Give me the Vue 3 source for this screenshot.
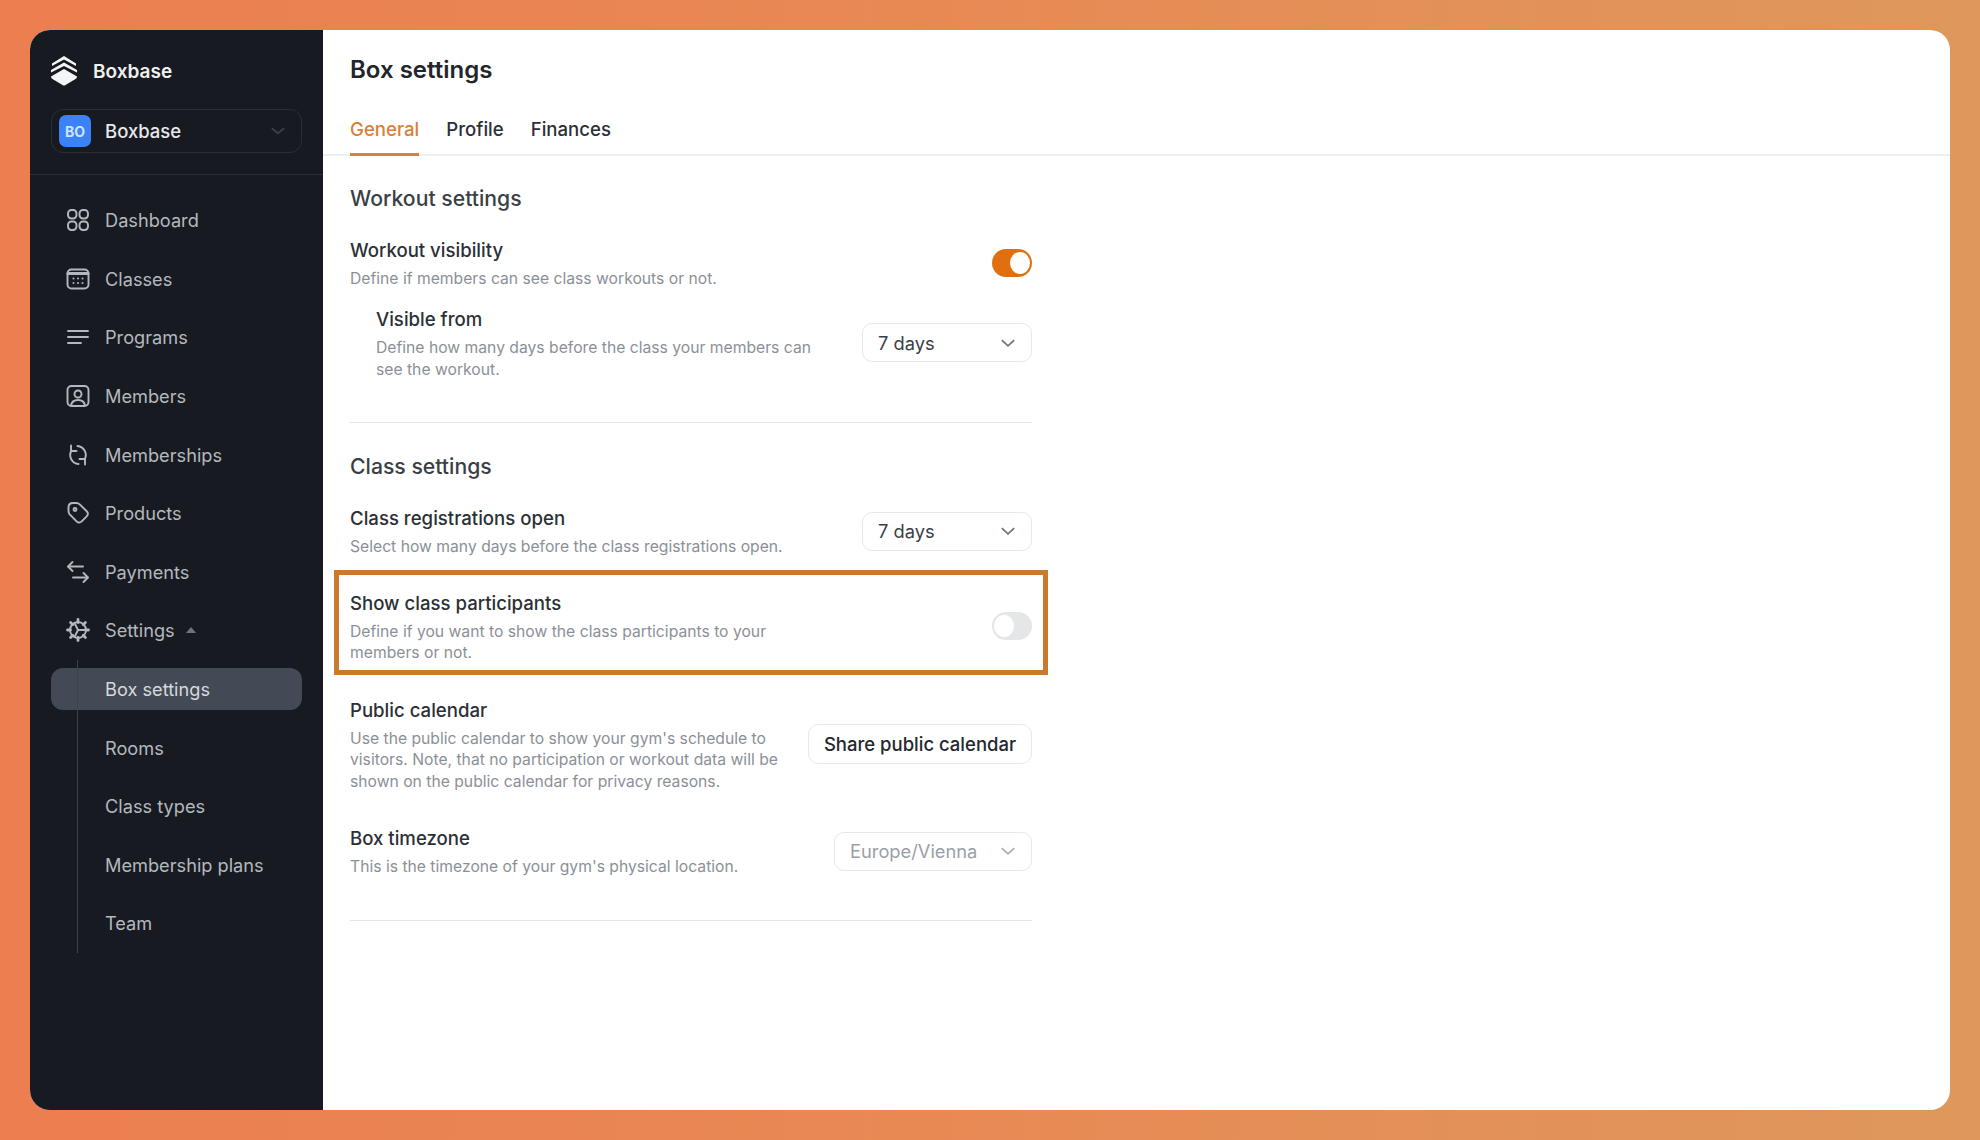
<template>
  <div class="page">
    <div class="window">
      <aside class="sidebar">
        <div class="brand">
          <svg class="logo" viewBox="0 0 28 30" width="28" height="30">
            <path d="M14 0 L26 7.500 V10 L14 3.500 L2 10 V7.500 Z" fill="#f4f5f6" />
            <path d="M14 6.500 L27 14 V16.500 L14 10 L1 16.500 V14 Z" fill="#f4f5f6" />
            <path d="M14 13 L27 20.500 Q27 22 25.500 23 L15.500 29 Q14 30 12.500 29 L2.500 23 Q1 22 1 20.500 Z" fill="#f4f5f6" />
          </svg>
          <span>Boxbase</span>
        </div>
        <div class="switcher">
          <span class="avatar">BO</span>
          <span class="switcher-name">Boxbase</span>
          <svg viewBox="0 0 16 16" width="18" height="18" fill="none" stroke="#3a4048" stroke-width="1.6">
            <path d="M2.500 5.500 L8 10 L13.500 5.500" />
          </svg>
        </div>
        <nav class="nav">
          <div v-for="item in navItems" :key="item.label" class="nav-item">
            <svg
              class="nav-icon"
              viewBox="0 0 24 24"
              fill="none"
              stroke="currentColor"
              stroke-width="1.9"
              stroke-linecap="round"
              stroke-linejoin="round"
              v-html="item.icon"
            ></svg>
            <span>{{ item.label }}</span>
            <span v-if="item.open" class="caret"></span>
          </div>
          <div class="subnav">
            <div
              v-for="sub in subItems"
              :key="sub"
              class="nav-item sub"
              :class="{ active: sub === 'Box settings' }"
            >
              {{ sub }}
            </div>
          </div>
        </nav>
      </aside>

      <main class="main">
        <header class="header">
          <h1>Box settings</h1>
          <div class="tabs">
            <span
              v-for="tab in tabs"
              :key="tab"
              class="tab"
              :class="{ current: tab === 'General' }"
            >{{ tab }}</span>
          </div>
        </header>

        <div class="content">
          <section class="section first">
            <h2>Workout settings</h2>
            <div class="row visibility">
              <div class="copy">
                <h3>Workout visibility</h3>
                <p>Define if members can see class workouts or not.</p>
              </div>
              <span class="toggle on"></span>
            </div>
            <div class="row nested">
              <div class="copy">
                <h3>Visible from</h3>
                <p>Define how many days before the class your members can see the workout.</p>
              </div>
              <div class="select">
                <span>7 days</span>
                <svg viewBox="0 0 16 16" width="18" height="18" fill="none" stroke="#6b7280" stroke-width="1.5">
                  <path d="M2.500 5.500 L8 10.500 L13.500 5.500" />
                </svg>
              </div>
            </div>
          </section>

          <section class="section second">
            <h2>Class settings</h2>
            <div class="row registrations">
              <div class="copy">
                <h3>Class registrations open</h3>
                <p>Select how many days before the class registrations open.</p>
              </div>
              <div class="select">
                <span>7 days</span>
                <svg viewBox="0 0 16 16" width="18" height="18" fill="none" stroke="#6b7280" stroke-width="1.5">
                  <path d="M2.500 5.500 L8 10.500 L13.500 5.500" />
                </svg>
              </div>
            </div>
            <div class="row highlighted">
              <div class="copy narrow">
                <h3>Show class participants</h3>
                <p>Define if you want to show the class participants to your members or not.</p>
              </div>
              <span class="toggle"></span>
            </div>
            <div class="row calendar">
              <div class="copy wide">
                <h3>Public calendar</h3>
                <p>Use the public calendar to show your gym's schedule to visitors. Note, that no participation or workout data will be shown on the public calendar for privacy reasons.</p>
              </div>
              <button class="share">Share public calendar</button>
            </div>
            <div class="row timezone">
              <div class="copy wide">
                <h3>Box timezone</h3>
                <p>This is the timezone of your gym's physical location.</p>
              </div>
              <div class="select disabled">
                <span>Europe/Vienna</span>
                <svg viewBox="0 0 16 16" width="18" height="18" fill="none" stroke="#a8adb5" stroke-width="1.5">
                  <path d="M2.500 5.500 L8 10.500 L13.500 5.500" />
                </svg>
              </div>
            </div>
          </section>
        </div>
      </main>
    </div>
  </div>
</template>

<script setup>
const navItems = [
  {
    label: 'Dashboard',
    icon: '<rect x="2" y="2" width="8.500" height="8.500" rx="3.400"/><rect x="13.500" y="2" width="8.500" height="8.500" rx="3.400"/><rect x="2" y="13.500" width="8.500" height="8.500" rx="3.400"/><rect x="13.500" y="13.500" width="8.500" height="8.500" rx="3.400"/>'
  },
  {
    label: 'Classes',
    icon: '<rect x="1.500" y="2.500" width="21" height="19" rx="4"/><path d="M2 6.500h20" stroke-width="3"/><path d="M7.500 11.500h.01M12 11.500h.01M16.500 11.500h.01M7.500 16h.01M12 16h.01M16.500 16h.01" stroke-width="2"/>'
  },
  {
    label: 'Programs',
    icon: '<path d="M2 6h20M2 12h20M2 18h13"/>'
  },
  {
    label: 'Members',
    icon: '<rect x="1.500" y="2" width="21" height="20" rx="4"/><circle cx="12" cy="10" r="3.500"/><path d="M5 21.500c.6-3.600 3.400-5.500 7-5.500s6.400 1.900 7 5.500"/>'
  },
  {
    label: 'Memberships',
    icon: '<path d="M5 2.500V8h5.500"/><path d="M5.200 8A9 9 0 0 0 12.500 21"/><path d="M19 21.500V16h-5.500"/><path d="M18.800 16A9 9 0 0 0 11.500 3"/>'
  },
  {
    label: 'Products',
    icon: '<path d="M2.500 6.500C2.500 3.800 4.300 2 7 2h3.500c1.200 0 2.300.4 3.200 1.300l7 6.900c1.600 1.600 1.600 3.600 0 5.100l-5 5c-1.600 1.600-3.600 1.600-5.100 0l-6.900-7c-.8-.9-1.200-2-1.200-3.200z"/><circle cx="9" cy="8.500" r="1.500"/>'
  },
  {
    label: 'Payments',
    icon: '<path d="M6.500 2L2 6.500 6.500 11"/><path d="M2.500 6.500H17"/><path d="M17.500 13l4.500 4.500-4.500 4.500"/><path d="M21.500 17.500H7"/>'
  },
  {
    label: 'Settings',
    open: true,
    icon: '<circle cx="12" cy="12" r="8"/><path d="M12 12L8.500 5M12 12h8M12 12l-3.500 7"/><path d="M12 1.500v3M12 19.500v3M1.500 12h3M19.500 12h3M4.600 4.600l2.100 2.100M17.300 17.300l2.100 2.100M4.600 19.400l2.100-2.100M17.300 6.700l2.100-2.100" stroke-width="2.800"/>'
  }
]

const subItems = ['Box settings', 'Rooms', 'Class types', 'Membership plans', 'Team']

const tabs = ['General', 'Profile', 'Finances']
</script>

<style>
html,
body {
  margin: 0;
  padding: 0;
}
</style>

<style scoped>
.page {
  width: 1980px;
  height: 1140px;
  box-sizing: border-box;
  padding: 30px;
  background: linear-gradient(90deg, #ec7e50 0%, #e88a55 50%, #de985c 100%);
  font-family: Inter, "Liberation Sans", sans-serif;
  overflow: hidden;
}

.window {
  display: flex;
  width: 1920px;
  height: 1080px;
  border-radius: 20px;
  overflow: hidden;
  background: #fff;
}

.sidebar {
  width: 293px;
  flex-shrink: 0;
  background: #171b21;
  box-sizing: border-box;
}

.brand {
  display: flex;
  align-items: center;
  gap: 15px;
  height: 30px;
  padding: 26px 0 0 20px;
  color: #eef0f2;
  font-size: 19px;
  font-weight: 600;
}

.logo {
  width: 28px;
  height: 30px;
  flex-shrink: 0;
}

.switcher {
  display: flex;
  align-items: center;
  box-sizing: border-box;
  height: 44px;
  margin: 23px 21px 0;
  padding: 0 14px 0 7px;
  border: 1px solid #2a2f37;
  border-radius: 12px;
  color: #e6e8eb;
  font-size: 18.5px;
  font-weight: 500;
}

.avatar {
  display: flex;
  align-items: center;
  justify-content: center;
  width: 32px;
  height: 32px;
  border-radius: 7px;
  background: #3b82f6;
  color: #cfe2ff;
  font-size: 14px;
  font-weight: 700;
}

.switcher-name {
  flex: 1;
  margin-left: 14px;
}

.nav {
  margin-top: 21px;
  padding: 24px 21px 0;
  border-top: 1px solid #2a2f37;
  display: flex;
  flex-direction: column;
  gap: 16px;
}

.nav-item {
  display: flex;
  align-items: center;
  gap: 15px;
  height: 42.6px;
  padding-left: 15px;
  color: #b4b8be;
  font-size: 18.2px;
}

.nav-icon {
  width: 24px;
  height: 24px;
  flex-shrink: 0;
}

.caret {
  width: 0;
  height: 0;
  margin-left: -4px;
  border-left: 5px solid transparent;
  border-right: 5px solid transparent;
  border-bottom: 6px solid #6f747b;
}

.subnav {
  position: relative;
  display: flex;
  flex-direction: column;
  gap: 16px;
}

.subnav::before {
  content: "";
  position: absolute;
  left: 26px;
  top: -8px;
  bottom: -8px;
  width: 1px;
  background: #3d424a;
  z-index: 1;
}

.nav-item.sub {
  padding-left: 54px;
}

.nav-item.active {
  background: #434a55;
  border-radius: 12px;
  color: #d6d9dd;
}

.main {
  flex: 1;
  min-width: 0;
}

.header {
  padding-top: 25px;
  border-bottom: 2px solid #eceef0;
}

h1 {
  margin: 0 0 0 27px;
  color: #22262c;
  font-size: 24px;
  line-height: 30px;
  font-weight: 600;
}

.tabs {
  display: flex;
  gap: 27px;
  margin: 33px 0 0 27px;
}

.tab {
  padding-bottom: 13px;
  border-bottom: 3px solid transparent;
  margin-bottom: -2px;
  color: #2b3037;
  font-size: 18.6px;
  line-height: 22px;
  font-weight: 500;
}

.tab.current {
  color: #d9803a;
  border-bottom-color: #d9803a;
}

.content {
  width: 682px;
  margin-left: 27px;
}

.section {
  border-bottom: 1px solid #e3e5e8;
}

.section.first {
  height: 267px;
  padding-top: 29px;
  box-sizing: border-box;
}

.section.second {
  height: 498px;
  padding-top: 30px;
  box-sizing: border-box;
}

h2 {
  margin: 0;
  color: #3a3f46;
  font-size: 21.2px;
  line-height: 26px;
  font-weight: 500;
}

.row {
  display: flex;
  align-items: center;
  justify-content: space-between;
}

.copy {
  width: 450px;
}

.copy.narrow {
  width: 440px;
}

h3 {
  margin: 0;
  color: #2b3037;
  font-size: 18.6px;
  line-height: 22px;
  font-weight: 500;
}

.copy p {
  margin: 7px 0 0;
  color: #8b9097;
  font-size: 15.7px;
  line-height: 21.5px;
}

.visibility {
  margin-top: 28px;
}

.visibility .toggle {
  margin-bottom: 2px;
}

.nested {
  align-items: flex-start;
  margin-top: 18.5px;
  padding-left: 26px;
}

.nested .select {
  margin-top: 15px;
}

.registrations {
  margin-top: 28px;
}

.registrations .select,
.timezone .select {
  margin-bottom: 2px;
}

.highlighted {
  position: relative;
  margin-top: 34px;
}

/* annotation frame around the row */
.highlighted::after {
  content: "";
  position: absolute;
  left: -16px;
  right: -16px;
  top: -22px;
  bottom: -11px;
  border: 5px solid #c87a2e;
  pointer-events: none;
}

.calendar {
  margin-top: 35px;
}

.timezone {
  margin-top: 35px;
}

.toggle {
  position: relative;
  display: block;
  width: 40px;
  height: 28px;
  margin-bottom: 4px;
  border-radius: 14px;
  background: #e5e6e8;
}

.toggle::after {
  content: "";
  position: absolute;
  top: 3px;
  left: 2px;
  width: 20px;
  height: 22px;
  border-radius: 50%;
  background: #fff;
}

.toggle.on {
  background: #e0700f;
}

.toggle.on::after {
  left: auto;
  right: 2px;
}

.select {
  display: flex;
  align-items: center;
  justify-content: space-between;
  box-sizing: border-box;
  width: 170px;
  height: 39px;
  padding: 0 14px 0 15px;
  border: 1px solid #e6e8eb;
  border-radius: 10px;
  color: #3a3f46;
  font-size: 18.3px;
}

.select.disabled {
  width: 198px;
  color: #9a9fa6;
}

.share {
  box-sizing: border-box;
  width: 224px;
  height: 40px;
  margin-bottom: 2px;
  padding: 0;
  background: #fff;
  border: 1px solid #e6e8eb;
  border-radius: 10px;
  color: #24282e;
  font-family: inherit;
  font-size: 18.5px;
  font-weight: 500;
}
</style>
